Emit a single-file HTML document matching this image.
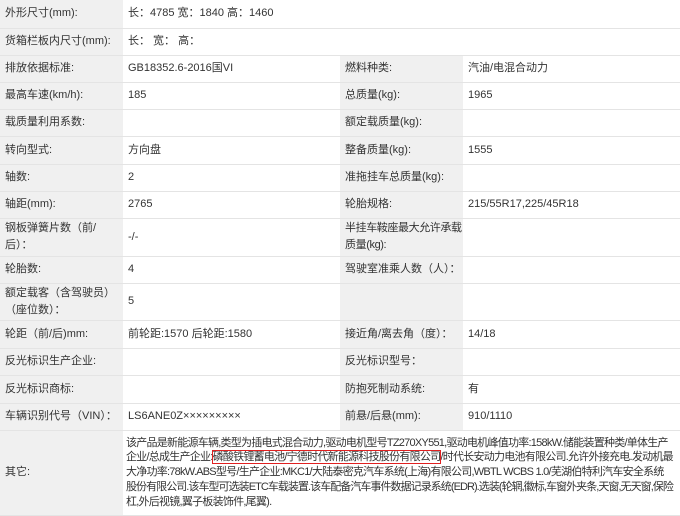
<!DOCTYPE html>
<html><head><meta charset="utf-8"><style>
*{margin:0;padding:0;box-sizing:border-box}
body{width:680px;height:514px;background:#fff;font-family:"Liberation Sans","Noto Sans CJK SC",sans-serif;font-size:11px;color:#333;overflow:hidden}
table{border-collapse:collapse;width:680px;table-layout:fixed}
td{border-bottom:1px solid #e4e4e4;padding:0 0 0 5px;vertical-align:middle;line-height:17px;white-space:nowrap;overflow:hidden}
td.l{background:#f0f0f0}
.o{line-height:14.8px;padding:3px 0 3px 3px;letter-spacing:-0.75px}
.r{outline:1.5px solid #e02020}
.t{letter-spacing:-0.95px}
</style></head><body>
<table>
<colgroup><col style="width:123px"><col style="width:217px"><col style="width:123px"><col style="width:217px"></colgroup>
<tr style="height:28px"><td class="l">外形尺寸(mm):</td><td colspan="3">长：4785 宽：1840 高：1460</td></tr>
<tr style="height:27px"><td class="l">货箱栏板内尺寸(mm):</td><td colspan="3">长： 宽： 高：</td></tr>
<tr style="height:27px"><td class="l">排放依据标准:</td><td>GB18352.6-2016国VI</td><td class="l">燃料种类:</td><td>汽油/电混合动力</td></tr>
<tr style="height:27px"><td class="l">最高车速(km/h):</td><td>185</td><td class="l">总质量(kg):</td><td>1965</td></tr>
<tr style="height:27px"><td class="l">载质量利用系数:</td><td></td><td class="l">额定载质量(kg):</td><td></td></tr>
<tr style="height:28px"><td class="l">转向型式:</td><td>方向盘</td><td class="l">整备质量(kg):</td><td>1555</td></tr>
<tr style="height:27px"><td class="l">轴数:</td><td>2</td><td class="l">准拖挂车总质量(kg):</td><td></td></tr>
<tr style="height:27px"><td class="l">轴距(mm):</td><td>2765</td><td class="l">轮胎规格:</td><td>215/55R17,225/45R18</td></tr>
<tr style="height:38px"><td class="l">钢板弹簧片数（前/<br>后）：</td><td>-/-</td><td class="l" style="letter-spacing:-0.4px">半挂车鞍座最大允许承载<br>质量(kg):</td><td></td></tr>
<tr style="height:27px"><td class="l">轮胎数:</td><td>4</td><td class="l">驾驶室准乘人数（人）：</td><td></td></tr>
<tr style="height:37px"><td class="l">额定载客（含驾驶员）<br>（座位数）：</td><td>5</td><td class="l"></td><td></td></tr>
<tr style="height:28px"><td class="l">轮距（前/后)mm:</td><td>前轮距:1570 后轮距:1580</td><td class="l">接近角/离去角（度）：</td><td>14/18</td></tr>
<tr style="height:27px"><td class="l">反光标识生产企业:</td><td></td><td class="l">反光标识型号：</td><td></td></tr>
<tr style="height:28px"><td class="l">反光标识商标:</td><td></td><td class="l">防抱死制动系统:</td><td>有</td></tr>
<tr style="height:27px"><td class="l">车辆识别代号（VIN）：</td><td>LS6ANE0Z×××××××××</td><td class="l">前悬/后悬(mm):</td><td>910/1110</td></tr>
<tr style="height:85px"><td class="l">其它:</td><td colspan="3" class="o">该产品是新能源车辆,类型为插电式混合动力,驱动电机型号TZ270XY551,驱动电机峰值功率:158kW.储能装置种类/单体生产<br>企业/总成生产企业:<span class="r">磷酸铁锂蓄电池/宁德时代新能源科技股份有限公司</span>/时代长安动力电池有限公司.允许外接充电.发动机最<br>大净功率:78kW.ABS型号/生产企业:MKC1/大陆泰密克汽车系统(上海)有限公司,WBTL WCBS 1.0/芜湖伯特利汽车安全系统<br><span class="t">股份有限公司.该车型可选装ETC车载装置.该车配备汽车事件数据记录系统(EDR).选装(轮辋,徽标,车窗外夹条,天窗,无天窗,保险</span><br>杠,外后视镜,翼子板装饰件,尾翼).</td></tr>
</table>
</body></html>
